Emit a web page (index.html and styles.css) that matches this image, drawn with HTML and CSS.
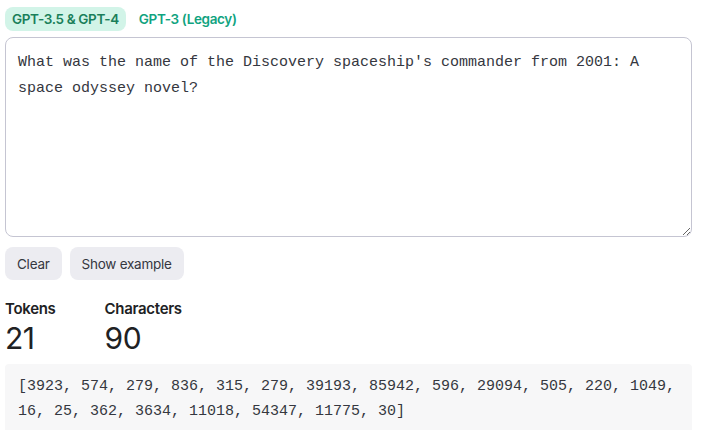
FILE: index.html
```html
<!DOCTYPE html>
<html>
<head>
<meta charset="utf-8">
<link rel="stylesheet" href="styles.css">
</head>
<body>
<div class="page">
  <div class="tabs">
    <button class="tab active">GPT-3.5 &amp; GPT-4</button>
    <button class="tab">GPT-3 (Legacy)</button>
  </div>
  <textarea class="input">What was the name of the Discovery spaceship's commander from 2001: A space odyssey novel?</textarea>
  <div class="actions">
    <button class="btn">Clear</button>
    <button class="btn">Show example</button>
  </div>
  <div class="stats">
    <div class="stat">
      <div class="stat-label">Tokens</div>
      <div class="stat-value">21</div>
    </div>
    <div class="stat">
      <div class="stat-label">Characters</div>
      <div class="stat-value">90</div>
    </div>
  </div>
  <div class="tokens">[3923, 574, 279, 836, 315, 279, 39193, 85942, 596, 29094, 505, 220, 1049, 16, 25, 362, 3634, 11018, 54347, 11775, 30]</div>
</div>
</body>
</html>
```

FILE: styles.css
```css
html, body {
  margin: 0;
  padding: 0;
  background: #ffffff;
}
body {
  font-family: Inter, "Liberation Sans", sans-serif;
  color: #202123;
  overflow: hidden;
}
.page {
  width: 687px;
  padding: 7px 0 0 5px;
  display: flex;
  flex-direction: column;
}
.tabs {
  display: flex;
  gap: 6px;
  height: 24px;
}
.tab {
  font-family: Inter, "Liberation Sans", sans-serif;
  font-weight: 600;
  font-size: 13.5px;
  letter-spacing: -0.35px;
  border: none;
  background: transparent;
  color: #10a37f;
  padding: 0 7px;
  border-radius: 8px;
  height: 24px;
  cursor: pointer;
}
.tab.active {
  background: #d2f4e8;
  color: #1a7f5a;
}
.input {
  margin-top: 6px;
  box-sizing: border-box;
  width: 687px;
  height: 200px;
  border: 1px solid #c5c5d2;
  border-radius: 8px;
  padding: 12px 12px;
  font-family: "Liberation Mono", monospace;
  font-size: 15px;
  line-height: 26px;
  color: #353740;
  resize: vertical;
  outline: none;
}
.actions {
  margin-top: 10px;
  display: flex;
  gap: 8px;
}
.btn {
  font-family: Inter, "Liberation Sans", sans-serif;
  font-size: 13.5px;
  letter-spacing: -0.25px;
  color: #353740;
  background: #ececf1;
  border: none;
  border-radius: 8px;
  height: 33px;
  padding: 0 12px;
}
.stats {
  margin-top: 20px;
  display: flex;
  gap: 49px;
}
.stat-label {
  font-size: 15px;
  font-weight: 600;
  letter-spacing: -0.3px;
  line-height: 18px;
  color: #202123;
}
.stat-value {
  font-size: 30px;
  font-weight: 400;
  letter-spacing: -0.5px;
  line-height: 40px;
  color: #202123;
}
.tokens {
  margin-top: 6px;
  background: #f7f7f8;
  padding: 10px 13px 20px 13px;
  font-family: "Liberation Mono", monospace;
  font-size: 15px;
  line-height: 25px;
  color: #353740;
  border-radius: 4px;
}
```
